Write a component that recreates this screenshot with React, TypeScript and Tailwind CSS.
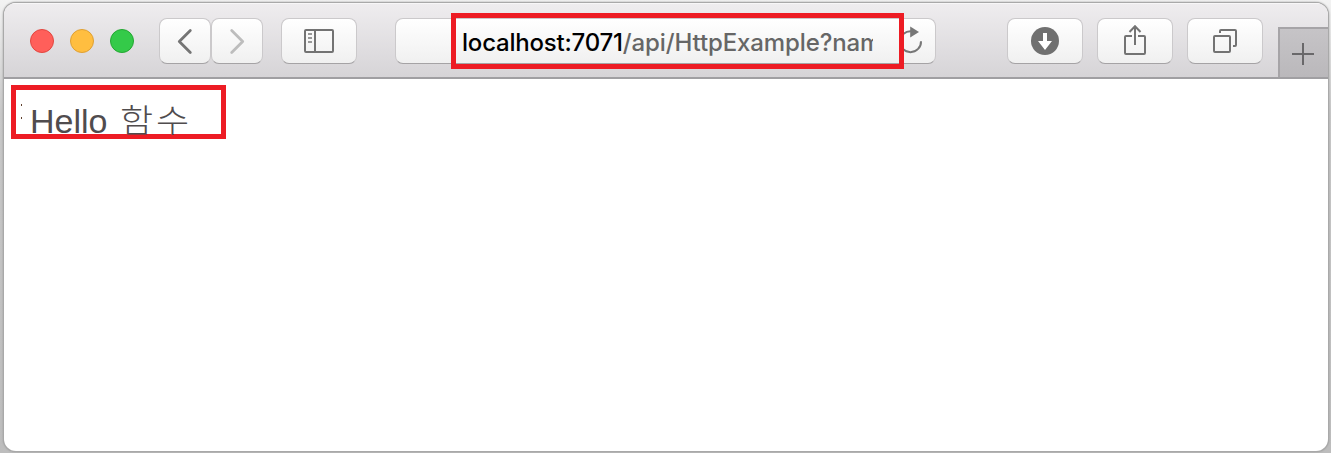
import type { ReactNode } from "react";

function ToolButton({ className, children }: { className: string; children: ReactNode }) {
  return (
    <button
      className={`flex h-[46px] shrink-0 items-center justify-center rounded-[8px] border border-[#cbc9cb] border-b-[#a5a3a5] bg-linear-to-b from-white to-[#f0f0f0] ${className}`}
    >
      {children}
    </button>
  );
}

function Toolbar() {
  return (
    <header className="flex h-[76px] items-start border-b-2 border-[#a09fa2] bg-linear-to-b from-[#efedef] to-[#d6d4d7] pl-[26px] shadow-[inset_0_1px_0_#f8f7f8]">
      <div className="mt-[26px] flex shrink-0 gap-4">
        <span className="size-6 rounded-full border border-[#e2463f] bg-[#ff5f5a]" />
        <span className="size-6 rounded-full border border-[#dfa033] bg-[#ffbe40]" />
        <span className="size-6 rounded-full border border-[#24a732] bg-[#34ca49]" />
      </div>
      <div className="mt-[15px] ml-[25px] flex shrink-0">
        <ToolButton className="w-[52px]">
          <svg width="52" height="44" className="shrink-0" fill="none" stroke="#757575" strokeWidth="2.8" strokeLinecap="round" strokeLinejoin="round">
            <path d="M31.3 11.5 20.3 22.5l11 11" />
          </svg>
        </ToolButton>
        <ToolButton className="w-[52px]">
          <svg width="52" height="44" className="shrink-0" fill="none" stroke="#bdbdbd" strokeWidth="2.8" strokeLinecap="round" strokeLinejoin="round">
            <path d="m20.7 11.5 11 11-11 11" />
          </svg>
        </ToolButton>
      </div>
      <ToolButton className="mt-[15px] ml-[18px] w-[76px]">
        <svg width="30" height="24" className="shrink-0" fill="none" stroke="#737373" strokeWidth="2">
          <rect x="1" y="1" width="28" height="22" rx="1" />
          <path d="M11 1v22" />
          <path d="M4 5h4M4 9h4M4 13h4" stroke="#999" />
        </svg>
      </ToolButton>
      <div className="relative mt-[15px] ml-[38px] flex h-[46px] w-[541px] shrink-0 items-center rounded-[8px] border border-[#cbc9cb] border-b-[#a5a3a5] bg-linear-to-b from-white to-[#f0f0f0] pl-[66px]">
        <div className="mt-[3px] h-[34px] w-[411px] shrink-0 overflow-hidden font-['Inter',sans-serif] text-[24px] leading-[34px] font-[450] whitespace-nowrap text-[#666]">
          <span className="tracking-[-0.2px] text-black">localhost:7071</span>
          <span className="tracking-[-0.12px]">/api/HttpExample?name=Functions</span>
        </div>
        <svg width="30" height="30" viewBox="0 0 30 30" className="ml-[23px] shrink-0" fill="none" stroke="#777" strokeWidth="2">
          <path d="M15.5 5.2A10.5 10.5 0 1 0 25 15.2" />
          <path d="M14.2 0.5v11L23 6Z" fill="#777" stroke="none" />
        </svg>
        <div className="absolute top-[-6px] left-[55px] h-[56px] w-[453px] border-5 border-[#ed1c24]" />
      </div>
      <div className="mt-[15px] ml-[71px] flex shrink-0 gap-[14px]">
        <ToolButton className="w-[76px]">
          <svg width="28" height="28" className="shrink-0">
            <circle cx="14" cy="14" r="14" fill="#707070" />
            <path d="M12 6h4v8h5l-7 9-7-9h5z" fill="white" />
          </svg>
        </ToolButton>
        <ToolButton className="w-[76px]">
          <svg width="24" height="34" className="mb-[3px] shrink-0" fill="none" stroke="#737373" strokeWidth="2">
            <path d="M9 13H3a1 1 0 0 0-1 1v16a1 1 0 0 0 1 1h18a1 1 0 0 0 1-1V14a1 1 0 0 0-1-1h-6M12 22V3M6.5 9 12 3.2 17.5 9" />
          </svg>
        </ToolButton>
        <ToolButton className="w-[76px]">
          <svg width="24" height="24" className="shrink-0" fill="none" stroke="#737373" strokeWidth="2">
            <rect x="1" y="7" width="16" height="16" rx="1" />
            <path d="M7 4V2a1 1 0 0 1 1-1h14a1 1 0 0 1 1 1v14a1 1 0 0 1-1 1h-2" />
          </svg>
        </ToolButton>
      </div>
      <button className="mt-[24px] ml-auto flex h-[50px] w-[50px] shrink-0 items-center justify-center border-t-2 border-l-2 border-[#a6a4a7] bg-linear-to-b from-[#c6c4c7] to-[#bab8bb]">
        <svg width="22" height="22" className="mt-[2px] mr-[2px] shrink-0" stroke="#69686a" strokeWidth="2">
          <path d="M11 0v22M0 11h22" />
        </svg>
      </button>
    </header>
  );
}

export default function App() {
  return (
    <div className="h-[453px] w-[1331px] overflow-hidden bg-linear-to-b from-[#f3f3f3] via-[#c8c8c8] via-25% to-[#bdbdbd] pt-[3px] pl-1">
      <main className="h-[448px] w-[1324px] overflow-hidden rounded-[12px] bg-white shadow-[0_0_0_1px_#a9a9a9,0_0_2px_1px_#9a9a9a]">
        <Toolbar />
        <div className="mt-[6px] ml-[7px] flex h-[54px] w-[215px] border-5 border-[#ed1c24]">
          <div className="mt-[14px] ml-[5px] flex h-[15px] w-px shrink-0 flex-col justify-between">
            <span className="h-[2px] bg-[#60402d]" />
            <span className="h-[2px] bg-[#60402d]" />
          </div>
          <p className="mt-[11px] ml-[8px] flex shrink-0 items-start text-[#504c4e]">
            <span className="w-[90px] font-['Liberation_Sans',sans-serif] text-[34px] leading-[40px]">Hello</span>
            <span className="mt-[1px] origin-top scale-y-[0.88] font-['Noto_Sans_CJK_KR',sans-serif] text-[36px] leading-[36px] font-light tracking-[3px]">함수</span>
          </p>
        </div>
      </main>
    </div>
  );
}
